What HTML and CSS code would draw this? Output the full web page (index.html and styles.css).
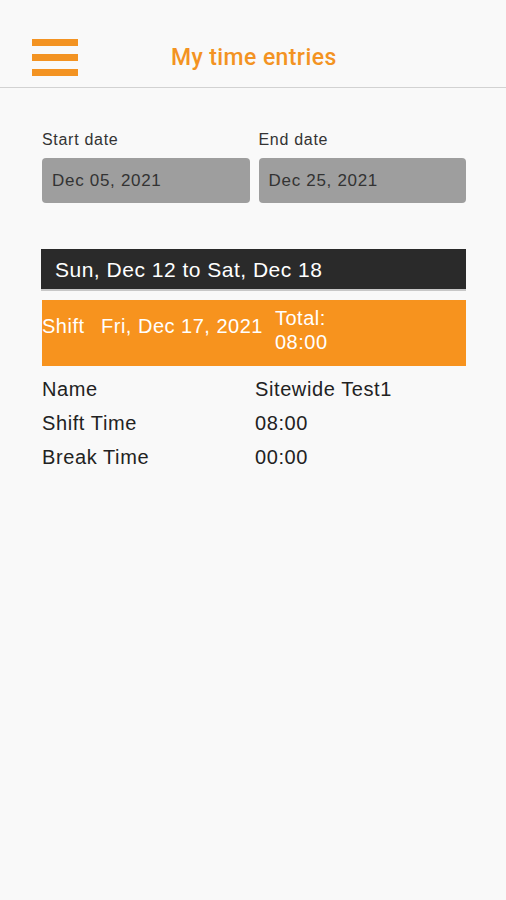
FILE: index.html
```html
<!DOCTYPE html>
<html lang="en">
<head>
  <meta charset="UTF-8" />
  <meta name="viewport" content="width=device-width, initial-scale=1.0"/>
  <title>My time entries</title>
  <link rel="stylesheet" href="styles.css">
</head>
<body>
  <div class="status-bar"></div>

  <header class="top-bar">
    <div class="menu-btn">
      <span></span>
      <span></span>
      <span></span>
    </div>
    <h1>My time entries</h1>
  </header>

  <main class="content">
    <div class="date-range">
      <div class="date-field">
        <label>Start date</label>
        <div class="date-box">Dec 05, 2021</div>
      </div>
      <div class="date-field">
        <label>End date</label>
        <div class="date-box">Dec 25, 2021</div>
      </div>
    </div>

    <div class="week-bar">Sun, Dec 12 to Sat, Dec 18</div>

    <div class="shift-bar">
      <span class="shift-label">Shift</span>
      <span class="shift-date">Fri, Dec 17, 2021</span>
      <span class="shift-total">Total:<br/>08:00</span>
    </div>

    <div class="details">
      <div class="row"><span>Name</span><span>Sitewide Test1</span></div>
      <div class="row"><span>Shift Time</span><span>08:00</span></div>
      <div class="row"><span>Break Time</span><span>00:00</span></div>
    </div>
  </main>
</body>
</html>
```

FILE: styles.css
```css
* {
  box-sizing: border-box;
}

body {
  margin: 0;
  background: #f9f9f9;
  font-family: 'Liberation Sans', Arial, sans-serif;
  color: #222;
}

.status-bar {
  height: 22px;
}

.top-bar {
  height: 66px;
  padding-top: 5px;
  display: flex;
  align-items: center;
  border-bottom: 1px solid #d2d2d2;
}

.menu-btn {
  margin-left: 32px;
  width: 46px;
  display: flex;
  flex-direction: column;
  gap: 8px;
}

.menu-btn span {
  display: block;
  height: 7px;
  background: #f39322;
}

.top-bar h1 {
  margin: 0 0 0 93px;
  font-family: Roboto, sans-serif;
  font-weight: 500;
  font-size: 23px;
  letter-spacing: 0.4px;
  color: #f39322;
}

.content {
  padding: 43px 40px 0 42px;
}

.date-range {
  display: flex;
  gap: 9px;
}

.date-field {
  flex: 1;
}

.date-field label {
  display: block;
  font-size: 16px;
  letter-spacing: 0.7px;
  color: #333;
  margin-bottom: 9px;
}

.date-box {
  height: 45px;
  background: #9e9e9e;
  border-radius: 4px;
  padding: 0 10px;
  display: flex;
  align-items: center;
  font-size: 17px;
  letter-spacing: 0.7px;
  color: #333;
}

.week-bar {
  margin: 46px 0 0 -1px;
  height: 40px;
  background: #2a2a2a;
  color: #fff;
  font-size: 21px;
  letter-spacing: 0.5px;
  padding: 9px 14px 0;
  box-shadow: 0 2px 0 #c8c8c8;
}

.shift-bar {
  margin-top: 11px;
  height: 66px;
  background: #f7931e;
  color: #fff;
  font-size: 20px;
  letter-spacing: 0.5px;
  display: flex;
  align-items: flex-start;
  padding-top: 15px;
}

.shift-label {
  width: 59px;
}

.shift-date {
  width: 174px;
}

.shift-total {
  margin-top: -9px;
  line-height: 24px;
}

.details {
  margin-top: 12px;
}

.row {
  display: flex;
  height: 34px;
  font-size: 20px;
  letter-spacing: 0.6px;
  color: #222;
}

.row span:first-child {
  width: 213px;
}
```
